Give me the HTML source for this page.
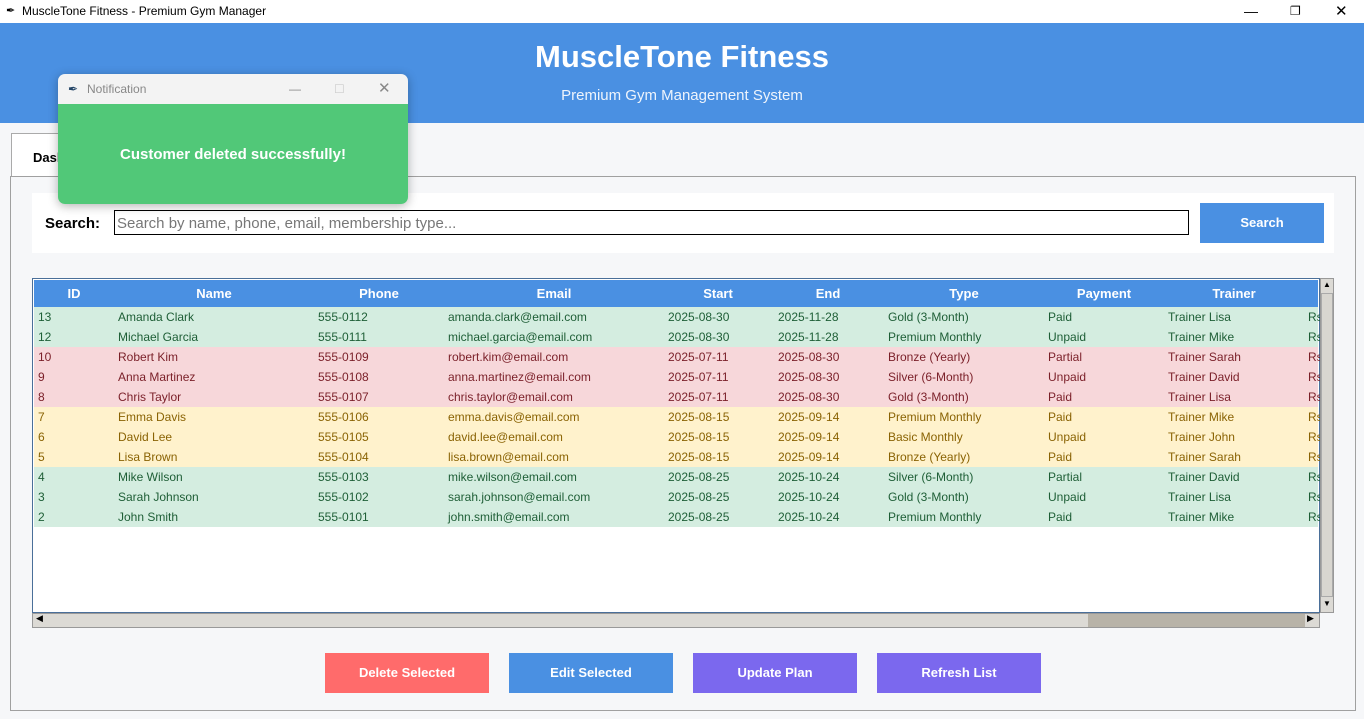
<!DOCTYPE html>
<html><head><style>
*{margin:0;padding:0;box-sizing:border-box}
body{width:1364px;height:719px;overflow:hidden;background:#f6f7f9;font-family:"Liberation Sans","DejaVu Sans",sans-serif;position:relative}
.a{position:absolute}
.row{position:absolute;left:34px;width:1284px;height:20px;font-size:12px;line-height:20px}
.row span{position:absolute;white-space:nowrap}
.g{background:#d4ede0;color:#1e5e36}.r{background:#f7d7da;color:#7a1f28}.y{background:#fff2cc;color:#8a6304}
.hd span{position:absolute;transform:translateX(-50%);color:#fff;font-weight:bold;font-size:13px;line-height:28px}
.btn{position:absolute;top:653px;width:164px;height:40px;color:#fff;font-weight:bold;font-size:13px;text-align:center;line-height:40px}
</style></head><body>
<div class="a" style="left:0;top:0;width:1364px;height:23px;background:#fff;font-size:12px;line-height:23px">
<span class="a" style="left:6px;font-size:11px">✒</span><span class="a" style="left:22px">MuscleTone Fitness - Premium Gym Manager</span>
<span class="a" style="left:1244px;font-size:14px">—</span><span class="a" style="left:1290px">❐</span><span class="a" style="left:1335px;font-size:15px">✕</span></div>
<div class="a" style="left:0;top:23px;width:1364px;height:100px;background:#4a90e2;color:#fff;text-align:center">
<div style="font-size:31px;font-weight:bold;margin-top:16px">MuscleTone Fitness</div>
<div style="font-size:15px;margin-top:12px;color:#eef4fc">Premium Gym Management System</div></div>
<div class="a" style="left:11px;top:133px;width:110px;height:44px;background:#fff;border:1px solid #aaa;border-bottom:none;font-size:13px;font-weight:bold;padding:16px 0 0 21px">Dashboard</div>
<div class="a" style="left:10px;top:176px;width:1346px;height:535px;border:1px solid #a0a0a0;background:#f6f7f9"></div>
<div class="a" style="left:32px;top:193px;width:1302px;height:60px;background:#fff"></div>
<div class="a" style="left:45px;top:215px;font-size:15px;font-weight:bold">Search:</div>
<div class="a" style="left:114px;top:210px;width:1075px;height:25px;border:1px solid #000;background:#fff;font-size:15px;color:#777;padding:3px 2px;line-height:19px">Search by name, phone, email, membership type...</div>
<div class="a" style="left:1200px;top:203px;width:124px;height:40px;background:#4a90e2;color:#fff;font-weight:bold;font-size:13px;text-align:center;line-height:40px">Search</div>
<div class="a" style="left:32px;top:278px;width:1288px;height:335px;border:1px solid #4a6f99;background:#fff"></div>
<div class="a hd" style="left:34px;top:280px;width:1284px;height:27px;background:#4a90e2">
<span style="left:40px">ID</span><span style="left:180px">Name</span><span style="left:345px">Phone</span><span style="left:520px">Email</span><span style="left:684px">Start</span><span style="left:794px">End</span><span style="left:930px">Type</span><span style="left:1070px">Payment</span><span style="left:1200px">Trainer</span></div>
<div id="rows"></div>
<div class="a" style="left:1320px;top:278px;width:14px;height:335px;background:#dcdad5;border:1px solid #999"></div>
<div class="a" style="left:1321px;top:280px;width:12px;font-size:8px;text-align:center">▲</div>
<div class="a" style="left:1321px;top:599px;width:12px;font-size:8px;text-align:center">▼</div>
<div class="a" style="left:1321px;top:293px;width:12px;height:304px;border:1px solid #aaa;background:#d8d6d0"></div>
<div class="a" style="left:32px;top:613px;width:1288px;height:15px;background:#dcdad5;border:1px solid #999"></div>
<div class="a" style="left:1088px;top:614px;width:217px;height:13px;background:#b8b3a8"></div>
<div class="a" style="left:36px;top:613px;font-size:9px">◀</div><div class="a" style="left:1307px;top:613px;font-size:9px">▶</div>
<div class="btn" style="left:325px;background:#ff6b6b">Delete Selected</div>
<div class="btn" style="left:509px;background:#4a90e2">Edit Selected</div>
<div class="btn" style="left:693px;background:#7b68ee">Update Plan</div>
<div class="btn" style="left:877px;background:#7b68ee">Refresh List</div>
<div class="a" style="left:58px;top:74px;width:350px;height:130px;border-radius:7px;overflow:hidden;box-shadow:0 2px 10px rgba(0,0,0,.3)">
<div style="height:30px;background:#f3f3f3;font-size:12px;color:#888;line-height:30px;position:relative"><span class="a" style="left:10px;color:#246">✒</span><span class="a" style="left:29px">Notification</span><span class="a" style="left:231px">—</span><span class="a" style="left:276px;color:#ccc">☐</span><span class="a" style="left:320px;font-size:15px">✕</span></div>
<div style="height:100px;background:#51c878;color:#fff;font-weight:bold;font-size:15px;text-align:center;line-height:102px">Customer deleted successfully!</div></div>
<script>
var d=[["g",13,"Amanda Clark","555-0112","amanda.clark@email.com","2025-08-30","2025-11-28","Gold (3-Month)","Paid","Trainer Lisa"],
["g",12,"Michael Garcia","555-0111","michael.garcia@email.com","2025-08-30","2025-11-28","Premium Monthly","Unpaid","Trainer Mike"],
["r",10,"Robert Kim","555-0109","robert.kim@email.com","2025-07-11","2025-08-30","Bronze (Yearly)","Partial","Trainer Sarah"],
["r",9,"Anna Martinez","555-0108","anna.martinez@email.com","2025-07-11","2025-08-30","Silver (6-Month)","Unpaid","Trainer David"],
["r",8,"Chris Taylor","555-0107","chris.taylor@email.com","2025-07-11","2025-08-30","Gold (3-Month)","Paid","Trainer Lisa"],
["y",7,"Emma Davis","555-0106","emma.davis@email.com","2025-08-15","2025-09-14","Premium Monthly","Paid","Trainer Mike"],
["y",6,"David Lee","555-0105","david.lee@email.com","2025-08-15","2025-09-14","Basic Monthly","Unpaid","Trainer John"],
["y",5,"Lisa Brown","555-0104","lisa.brown@email.com","2025-08-15","2025-09-14","Bronze (Yearly)","Paid","Trainer Sarah"],
["g",4,"Mike Wilson","555-0103","mike.wilson@email.com","2025-08-25","2025-10-24","Silver (6-Month)","Partial","Trainer David"],
["g",3,"Sarah Johnson","555-0102","sarah.johnson@email.com","2025-08-25","2025-10-24","Gold (3-Month)","Unpaid","Trainer Lisa"],
["g",2,"John Smith","555-0101","john.smith@email.com","2025-08-25","2025-10-24","Premium Monthly","Paid","Trainer Mike"]];
var xs=[4,84,284,414,634,744,854,1014,1134,1274],h="";
d.forEach(function(r,i){h+='<div class="row '+r[0]+'" style="top:'+(307+i*20)+'px">';for(var j=1;j<10;j++)h+='<span style="left:'+xs[j-1]+'px">'+r[j]+'</span>';h+='<span style="left:1274px">Rs</span></div>';});
document.getElementById("rows").innerHTML=h;
</script>
</body></html>
